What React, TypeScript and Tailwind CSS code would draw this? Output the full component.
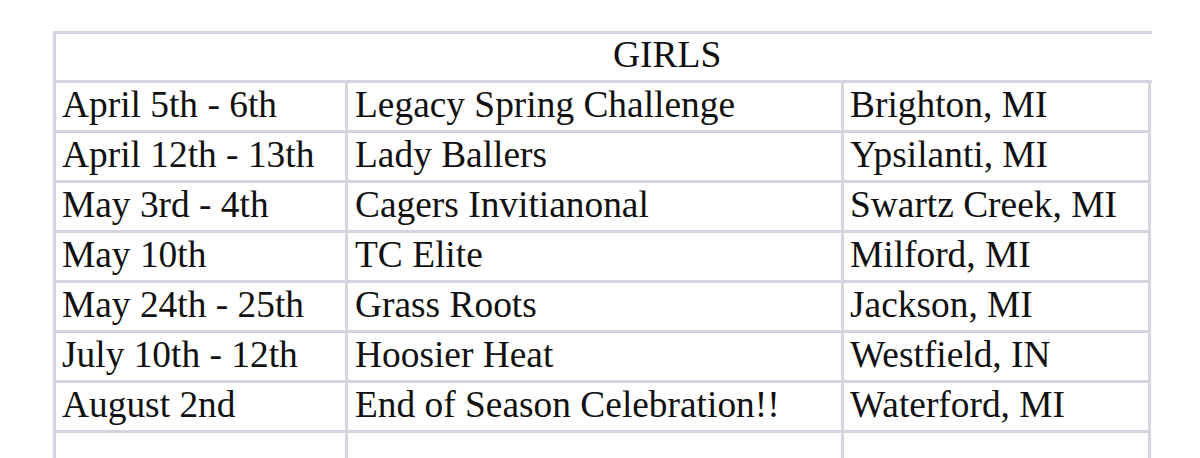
const rows = [
  { date: "April 5th - 6th", event: "Legacy Spring Challenge", place: "Brighton, MI" },
  { date: "April 12th - 13th", event: "Lady Ballers", place: "Ypsilanti, MI" },
  { date: "May 3rd - 4th", event: "Cagers Invitianonal", place: "Swartz Creek, MI" },
  { date: "May 10th", event: "TC Elite", place: "Milford, MI" },
  { date: "May 24th - 25th", event: "Grass Roots", place: "Jackson, MI" },
  { date: "July 10th - 12th", event: "Hoosier Heat", place: "Westfield, IN" },
  { date: "August 2nd", event: "End of Season Celebration!!", place: "Waterford, MI" },
  { date: "", event: "", place: "" },
];

const cell =
  "h-[50px] border-r-[3px] border-b-[3px] border-[#d5d5e1] leading-[43px] whitespace-nowrap overflow-hidden";

export default function App() {
  return (
    <div
      className="h-[458px] w-[1200px] overflow-hidden bg-white pt-[31px] pl-[53px] text-[#111] text-[37.4px]"
      style={{ fontFamily: '"Liberation Serif", "Times New Roman", serif' }}
    >
      <div className="w-[1099px] border-l-[3px] border-t-[3px] border-[#d5d5e1]">
        {/* header row, no right edge (image is cropped) */}
        <div className="h-[49px] border-b-[3px] border-[#d5d5e1] pl-[557px] leading-[42px] text-[37.5px]">
          GIRLS
        </div>

        {rows.map((r, i) => (
          <div key={i} className="grid grid-cols-[292px_496px_307px]">
            <div className={`${cell} pl-[6px]`}>{r.date}</div>
            <div className={`${cell} pl-[7px]`}>{r.event}</div>
            <div className={`${cell} pl-[6px]`}>{r.place}</div>
          </div>
        ))}
      </div>
    </div>
  );
}
